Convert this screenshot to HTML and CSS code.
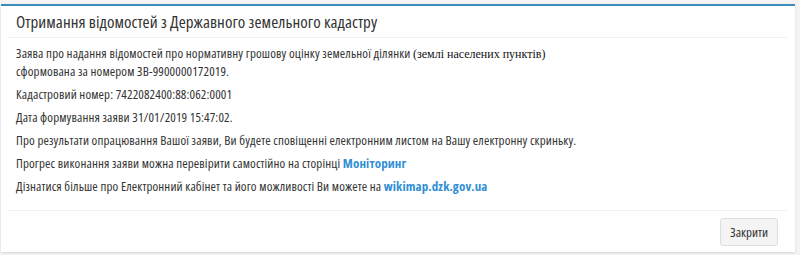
FILE: index.html
```html
<!DOCTYPE html>
<html lang="uk">
<head>
<meta charset="utf-8">
<link rel="stylesheet" href="styles.css">
</head>
<body>
<div class="card">
  <div class="card-header">
    <h3 class="card-title">Отримання відомостей з Державного земельного кадастру</h3>
  </div>
  <div class="card-body">
    <p>Заява про надання відомостей про нормативну грошову оцінку земельної ділянки <span class="serif">(землі населених пунктів)</span><br>сформована за номером ЗВ-9900000172019.</p>
    <p>Кадастровий номер: 7422082400:88:062:0001</p>
    <p>Дата формування заяви 31/01/2019 15:47:02.</p>
    <p>Про результати опрацювання Вашої заяви, Ви будете сповіщенні електронним листом на Вашу електронну скриньку.</p>
    <p>Прогрес виконання заяви можна перевірити самостійно на сторінці <a class="link" href="#">Моніторинг</a></p>
    <p>Дізнатися більше про Електронний кабінет та його можливості Ви можете на <a class="link" href="#">wikimap.dzk.gov.ua</a></p>
  </div>
  <div class="card-footer">
    <button class="btn">Закрити</button>
  </div>
</div>
</body>
</html>
```
FILE: styles.css
```css
html, body {
  margin: 0;
  padding: 0;
  background: #f4f4f4;
}
body {
  padding: 4px 5px 3px 1px;
  font-family: "Open Sans", "Noto Sans", sans-serif;
  font-stretch: condensed;
  color: #333;
}
.card {
  background: #fff;
  border-top: 2px solid #3c8dbc;
  box-shadow: 0 1px 2px rgba(0,0,0,0.12);
  height: 248px;
  box-sizing: border-box;
  display: flex;
  flex-direction: column;
}
.card-header {
  margin: 0 8px;
  padding: 0 7px;
  height: 31px;
  border-bottom: 1px solid #f0f0f0;
  display: flex;
  align-items: center;
}
.card-title {
  margin: 0;
  font-size: 17px;
  font-weight: 400;
  letter-spacing: 0.06px;
  color: #333;
}
.card-body {
  padding: 6px 15px 10px;
  height: 172px;
  box-sizing: border-box;
}
.card-body p {
  margin: 0 0 5px;
  font-size: 13px;
  line-height: 18px;
  letter-spacing: 0.12px;
}
.serif {
  font-family: "Liberation Serif", serif;
  font-stretch: normal;
  font-size: 12px;
  line-height: 1;
  letter-spacing: 0;
  color: #111;
}
.link {
  color: #2f8fd4;
  font-weight: 700;
  text-decoration: none;
}
.card-footer {
  margin: 0 8px;
  border-top: 1px solid #f0f0f0;
  flex: 1;
  display: flex;
  justify-content: flex-end;
  align-items: flex-start;
  padding: 7px 9px 0 0;
}
.btn {
  font-family: "Open Sans", "Noto Sans", sans-serif;
  font-stretch: condensed;
  font-size: 13px;
  color: #333;
  background: #f4f4f4;
  border: 1px solid #ddd;
  border-radius: 3px;
  height: 28px;
  padding: 0 9px;
}
```
